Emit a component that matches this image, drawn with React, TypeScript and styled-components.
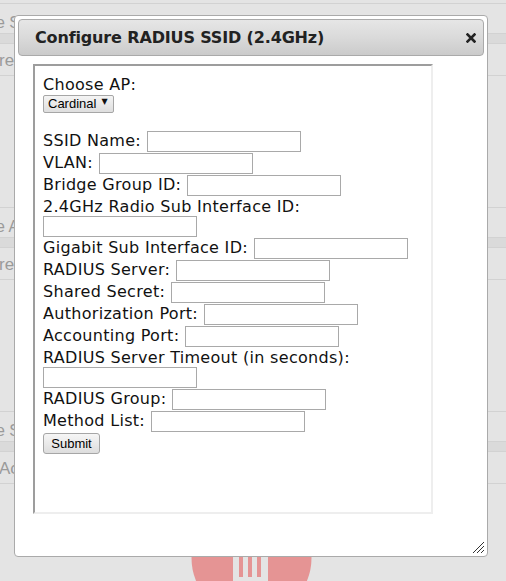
import React from "react";
import styled, { createGlobalStyle } from "styled-components";

const GlobalStyle = createGlobalStyle`
  html, body { margin: 0; padding: 0; }
  body { background: #e4e4e4; font-family: "DejaVu Sans", Verdana, sans-serif; }
  * { box-sizing: border-box; }
`;

const Page = styled.div`
  position: relative;
  width: 506px;
  height: 581px;
  overflow: hidden;
  background: #e4e4e4;
`;

/* ---------- background page (partly hidden by the dialog) ---------- */
const Backdrop = styled.div`
  display: flex;
  flex-direction: column;
  padding-top: 3px;
`;

const Card = styled.section`
  height: 204px;
  border-top: 1px solid #d2d2d2;
  display: flex;
  flex-direction: column;
`;

const CardHeader = styled.div`
  height: 30px;
  display: flex;
  align-items: center;
  padding-top: 8px;
  font-family: "Liberation Sans", Arial, sans-serif;
  font-size: 16px;
  color: #9a9a9a;
  border-bottom: 1px solid #d2d2d2;
`;

const CardBand = styled.div`
  height: 10px;
  background: #dadada;
  border-bottom: 1px solid #d2d2d2;
`;

const CardRow = styled.div`
  height: 32px;
  display: flex;
  align-items: center;
  padding-top: 3px;
  font-family: "Liberation Sans", Arial, sans-serif;
  font-size: 17px;
  color: #9a9a9a;
  border-bottom: 1px solid #d2d2d2;
`;

const Clip = styled.span<{ $shift: number }>`
  white-space: nowrap;
  margin-left: ${(p) => p.$shift}px;
`;

const Logo = styled.svg`
  position: absolute;
  left: 190px;
  top: 497px;
`;

/* ---------- dialog ---------- */
const Dialog = styled.div`
  position: absolute;
  left: 14px;
  top: 15px;
  width: 474px;
  height: 542px;
  background: #fff;
  border: 1px solid #aaaaaa;
  border-radius: 4px;
  padding: 3px;
  display: flex;
  flex-direction: column;
`;

const TitleBar = styled.div`
  height: 37px;
  flex: none;
  border: 1px solid #aaaaaa;
  border-radius: 4px;
  background: linear-gradient(to bottom, #e6e6e6 0%, #dadada 50%, #cbcbcb 100%);
  display: flex;
  align-items: center;
  justify-content: space-between;
  padding: 0 6px 0 16px;
`;

const Title = styled.span`
  font-family: "DejaVu Sans", Verdana, sans-serif;
  font-weight: bold;
  font-size: 16px;
  color: #222222;
  letter-spacing: -0.15px;
`;

const CloseButton = styled.button`
  width: 12px;
  height: 12px;
  padding: 0;
  border: 0;
  background: transparent;
  display: flex;
  align-items: center;
  justify-content: center;
`;

const Content = styled.div`
  flex: 1;
  padding: 8px 0 0 15px;
`;

const Frame = styled.div`
  width: 400px;
  height: 450px;
  border-style: solid;
  border-width: 2px;
  border-color: #9d9d9d #eeeeee #eeeeee #9d9d9d;
  background: #fff;
`;

const Form = styled.form`
  display: flex;
  flex-direction: column;
  padding: 11px 8px 8px 8px;
  font-family: "DejaVu Sans", Verdana, sans-serif;
  font-size: 16px;
  letter-spacing: 0.3px;
  color: #111;
`;

const Heading = styled.div`
  line-height: 16px;
  height: 16px;
`;

const TextLine = styled.div`
  line-height: 19px;
  height: 19px;
  white-space: nowrap;
`;

const Row = styled.div<{ $gapTop?: number }>`
  display: flex;
  align-items: flex-start;
  height: 22px;
  margin-top: ${(p) => p.$gapTop ?? 0}px;
`;

const Label = styled.label`
  line-height: 19px;
  white-space: nowrap;
  margin-right: 6px;
`;

const TextInput = styled.input`
  width: 154px;
  height: 21px;
  margin: 0;
  padding: 1px 2px;
  border: 1px solid #a9a9a9;
  background: #fff;
  font-family: "Liberation Sans", Arial, sans-serif;
  font-size: 13px;
`;

const SelectWrap = styled.div`
  position: relative;
  width: 71px;
  height: 18px;
`;

const Select = styled.select`
  appearance: none;
  width: 71px;
  height: 18px;
  margin: 0;
  padding: 0 0 0 4px;
  border: 1px solid #a6a6a6;
  border-radius: 2px;
  background: linear-gradient(to bottom, #f4f4f4, #dedede);
  font-family: "Liberation Sans", Arial, sans-serif;
  font-size: 13px;
  letter-spacing: 0;
  color: #000;
`;

const Arrow = styled.span`
  position: absolute;
  right: 6px;
  top: 5px;
  font-size: 8px;
  line-height: 8px;
  color: #111;
  pointer-events: none;
`;

const SubmitButton = styled.button`
  width: 57px;
  height: 21px;
  margin: 0;
  padding: 0;
  border: 1px solid #a6a6a6;
  border-radius: 3px;
  background: linear-gradient(to bottom, #f6f6f6, #dddddd);
  font-family: "Liberation Sans", Arial, sans-serif;
  font-size: 13px;
  letter-spacing: 0;
  color: #000;
`;

const ResizeHandle = styled.svg`
  position: absolute;
  right: 2px;
  bottom: 2px;
`;

export default function App() {
  return (
    <>
      <GlobalStyle />
      <Page>
        <Backdrop>
          <Card>
            <CardHeader><Clip $shift={-4}>e S</Clip></CardHeader>
            <CardBand />
            <CardRow><Clip $shift={-1}>re</Clip></CardRow>
          </Card>
          <Card>
            <CardHeader><Clip $shift={-4}>e A</Clip></CardHeader>
            <CardBand />
            <CardRow><Clip $shift={-1}>re</Clip></CardRow>
          </Card>
          <Card>
            <CardHeader><Clip $shift={-4}>e S</Clip></CardHeader>
            <CardBand />
            <CardRow><Clip $shift={-1}>Acc</Clip></CardRow>
          </Card>
        </Backdrop>
        <Logo width="124" height="84" viewBox="0 0 124 84">
          <circle cx="61.5" cy="61" r="60" fill="#e59494" />
          <rect x="43" y="60" width="35" height="30" fill="#e4e4e4" />
          <rect x="49" y="60" width="4" height="20" fill="#e59494" />
          <rect x="58" y="60" width="4" height="20" fill="#e59494" />
          <rect x="67" y="60" width="4" height="20" fill="#e59494" />
        </Logo>
        <Dialog>
          <TitleBar>
            <Title>Configure RADIUS SSID (2.4GHz)</Title>
            <CloseButton aria-label="close">
              <svg width="10" height="10" viewBox="0 0 10 10">
                <path d="M1.5 1.5 L8.5 8.5 M8.5 1.5 L1.5 8.5" stroke="#222" strokeWidth="2.6" strokeLinecap="square" />
              </svg>
            </CloseButton>
          </TitleBar>
          <Content>
            <Frame>
              <Form onSubmit={(e) => e.preventDefault()}>
                <Heading>Choose AP:</Heading>
                <SelectWrap>
                  <Select defaultValue="Cardinal">
                    <option>Cardinal</option>
                  </Select>
                  <Arrow>▼</Arrow>
                </SelectWrap>
                <Row $gapTop={20}><Label>SSID Name:</Label><TextInput type="text" /></Row>
                <Row><Label>VLAN:</Label><TextInput type="text" /></Row>
                <Row><Label>Bridge Group ID:</Label><TextInput type="text" /></Row>
                <TextLine>2.4GHz Radio Sub Interface ID:</TextLine>
                <Row><TextInput type="text" /></Row>
                <Row><Label>Gigabit Sub Interface ID:</Label><TextInput type="text" /></Row>
                <Row><Label>RADIUS Server:</Label><TextInput type="text" /></Row>
                <Row><Label>Shared Secret:</Label><TextInput type="password" /></Row>
                <Row><Label>Authorization Port:</Label><TextInput type="text" /></Row>
                <Row><Label>Accounting Port:</Label><TextInput type="text" /></Row>
                <TextLine>RADIUS Server Timeout (in seconds):</TextLine>
                <Row><TextInput type="text" /></Row>
                <Row><Label>RADIUS Group:</Label><TextInput type="text" /></Row>
                <Row><Label>Method List:</Label><TextInput type="text" /></Row>
                <Row><SubmitButton type="submit">Submit</SubmitButton></Row>
              </Form>
            </Frame>
          </Content>
          <ResizeHandle width="13" height="13" viewBox="0 0 13 13">
            <path d="M1 12 L12 1 M5 12 L12 5 M9 12 L12 9" stroke="#333" strokeWidth="1" />
          </ResizeHandle>
        </Dialog>
      </Page>
    </>
  );
}
